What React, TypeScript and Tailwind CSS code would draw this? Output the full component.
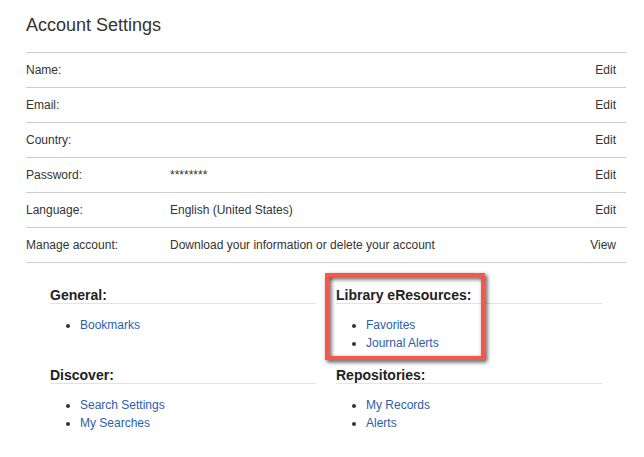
import React from "react";

const ROWS = [
  { label: "Name:", value: "", action: "Edit" },
  { label: "Email:", value: "", action: "Edit" },
  { label: "Country:", value: "", action: "Edit" },
  { label: "Password:", value: "********", action: "Edit" },
  { label: "Language:", value: "English (United States)", action: "Edit" },
  {
    label: "Manage account:",
    value: "Download your information or delete your account",
    action: "View",
  },
];

const SECTIONS = [
  { title: "General:", links: ["Bookmarks"] },
  { title: "Library eResources:", links: ["Favorites", "Journal Alerts"], highlight: true },
  { title: "Discover:", links: ["Search Settings", "My Searches"] },
  { title: "Repositories:", links: ["My Records", "Alerts"] },
];

export default function App() {
  return (
    <div
      className="min-h-screen bg-white pl-[26px] text-[#333]"
      style={{ fontFamily: '"Liberation Sans", Arial, sans-serif' }}
    >
      <div className="w-[600px]">
        <h1 className="pt-[14px] pb-[16px] text-[18px] leading-[22px] font-normal">
          Account Settings
        </h1>

        {/* Account rows */}
        <div className="border-b border-[#ccc]">
          {ROWS.map((row) => (
            <div
              key={row.label}
              className="flex h-[35px] items-center border-t border-[#ccc] pr-[10px] text-[12px] leading-[14px]"
            >
              <div className="w-[144px] shrink-0">{row.label}</div>
              <div className="flex-1">{row.value}</div>
              <a className="cursor-pointer">{row.action}</a>
            </div>
          ))}
        </div>

        {/* Shortcut sections */}
        <div className="grid grid-cols-2 gap-x-5 gap-y-[15px] px-6 pt-[24px]">
          {SECTIONS.map((s) => (
            <div key={s.title} className="relative">
              <h3 className="border-b border-[#e3e3e3] text-[14px] leading-[16px] font-bold text-[#222]">
                {s.title}
              </h3>
              <ul className="mt-[12px] list-disc pl-[30px] text-[12px] leading-[18px]">
                {s.links.map((l) => (
                  <li key={l}>
                    <a className="cursor-pointer text-[#2c5ea8]">{l}</a>
                  </li>
                ))}
              </ul>
              {s.highlight && (
                <div className="pointer-events-none absolute -top-[14px] -left-[11px] h-[87px] w-[160px] border-4 border-[#f5574b] drop-shadow-[2px_2px_2px_rgba(0,0,0,0.75)]" />
              )}
            </div>
          ))}
        </div>
      </div>
    </div>
  );
}
